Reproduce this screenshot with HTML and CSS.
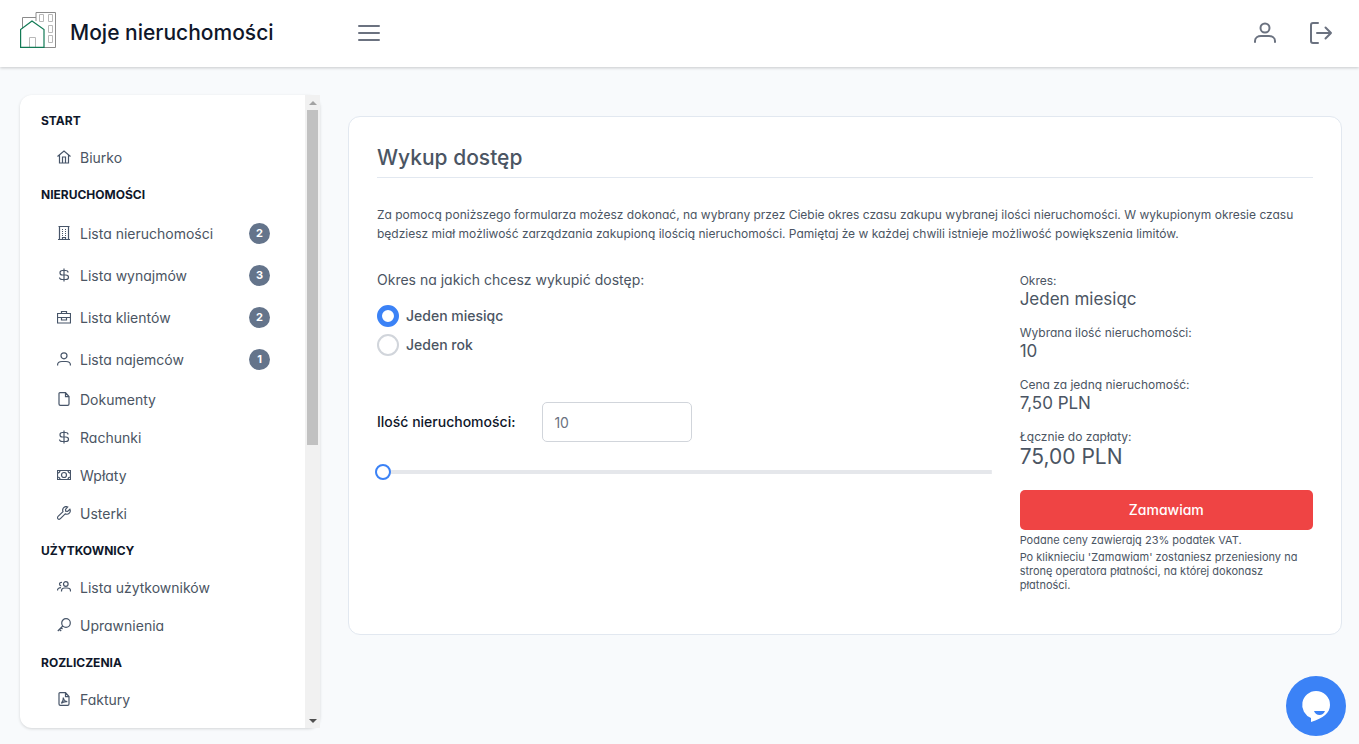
FILE: index.html
```html
<!DOCTYPE html>
<html lang="pl">
<head>
<meta charset="utf-8">
<meta name="viewport" content="width=device-width, initial-scale=1">
<title>Moje nieruchomości</title>
<link rel="stylesheet" href="styles.css">
</head>
<body>
<header class="topbar">
  <a class="brand" href="#">
    <svg class="brand-logo" viewBox="0 0 36 36" fill="none">
      <g stroke="#8b8b8b"><path d="M2.500 16V5.500H16M16 9V.5H35.500V35.500H24"/></g>
      <g stroke="#b8b8b8"><path d="M19.500 2.500h4v7h-4zM28.500 2.500h4v7h-4zM28.500 13.500h4v7h-4zM28.500 23.500h4v7h-4zM9.500 35V25.500h6V35"/></g>
      <path d="M.6 35.400V17.500L12 9l12 8.500v17.900z" stroke="#127a55" stroke-width="1.200"/>
    </svg>
    <span>Moje nieruchomości</span>
  </a>
  <button class="icon-button" type="button" aria-label="Menu">
    <svg viewBox="0 0 24 24"><path d="M2 5h20M2 12h20M2 19h20"/></svg>
  </button>
  <nav class="topbar-actions" aria-label="Konto">
    <button class="icon-button" type="button" aria-label="Profil">
      <svg viewBox="0 0 24 24"><circle cx="12" cy="7" r="4.500"/><path d="M2 21v-1c0-3.300 3-5 6-5h8c3 0 6 1.700 6 5v1"/></svg>
    </button>
    <button class="icon-button" type="button" aria-label="Wyloguj">
      <svg viewBox="0 0 24 24"><path d="M9 2H4C2.900 2 2 2.900 2 4v16c0 1.100.9 2 2 2h5M8 12h14M16.500 6.500 22 12l-5.500 5.500"/></svg>
    </button>
  </nav>
</header>

<div class="layout">
  <aside class="sidebar">
    <nav class="menu" aria-label="Menu główne">
      <h2 class="menu-heading">START</h2>
      <a class="menu-item" href="#"><svg viewBox="0 0 14 14"><path d="M.5 6.500 7 1l6.500 5.500M2.500 5v8h9V5M5.500 13V7h3v6"/></svg><span class="menu-label">Biurko</span></a>

      <h2 class="menu-heading">NIERUCHOMOŚCI</h2>
      <a class="menu-item counted" href="#"><svg viewBox="0 0 14 14"><path d="M1 13.500h12M2.500 13.500V.5h9v13M1.500.5h11M5 3.500h1M8 3.500h1M5 5.500h1M8 5.500h1M5 7.500h1M8 7.500h1M5 9.500h1M8 9.500h1M5.500 13.500v-2h3v2"/></svg><span class="menu-label">Lista nieruchomości</span><span class="badge">2</span></a>
      <a class="menu-item counted" href="#"><svg viewBox="0 0 14 14"><path d="M7 .5v13M11 4.500C11 3 10 2.500 8.500 2.500H5.300C3.800 2.500 3 3.300 3 4.700S3.800 7 5.300 7h3.400c1.500 0 2.800.7 2.800 2.200s-1.300 2.300-2.800 2.300H5.200c-1.500 0-2.700-.7-2.700-2"/></svg><span class="menu-label">Lista wynajmów</span><span class="badge">3</span></a>
      <a class="menu-item counted" href="#"><svg viewBox="0 0 14 14"><path d="M.5 3.500h13v9.500H.5zM4.500 3.500V1.500h5v2M.5 7.500h13M4.500 7.500V10h5V7.500"/></svg><span class="menu-label">Lista klientów</span><span class="badge">2</span></a>
      <a class="menu-item counted" href="#"><svg viewBox="0 0 14 14"><circle cx="7" cy="3.800" r="3"/><path d="M.6 13.500v-.7C.6 10.700 2.500 9.500 5 9.500h4c2.500 0 4.400 1.200 4.400 3.300v.7"/></svg><span class="menu-label">Lista najemców</span><span class="badge">1</span></a>
      <a class="menu-item" href="#"><svg viewBox="0 0 14 14"><path d="M3 .6h5.500l3.500 4V12c0 .8-.6 1.400-1.400 1.400H3.400C2.600 13.400 2 12.800 2 12V1.600c0-.6.4-1 1-1zM8.500.6V4.600H12"/></svg><span class="menu-label">Dokumenty</span></a>
      <a class="menu-item" href="#"><svg viewBox="0 0 14 14"><path d="M7 .5v13M11 4.500C11 3 10 2.500 8.500 2.500H5.300C3.800 2.500 3 3.300 3 4.700S3.800 7 5.300 7h3.400c1.500 0 2.800.7 2.800 2.200s-1.300 2.300-2.800 2.300H5.200c-1.500 0-2.700-.7-2.700-2"/></svg><span class="menu-label">Rachunki</span></a>
      <a class="menu-item" href="#"><svg viewBox="0 0 14 14"><path d="M.5 2.500h13v9H.5zM.5 5c1.500 0 2.500-1 2.500-2.500M13.500 5C12 5 11 4 11 2.500M.5 9C2 9 3 10 3 11.500M13.500 9c-1.500 0-2.500 1-2.500 2.500"/><circle cx="7" cy="7" r="2.500"/></svg><span class="menu-label">Wpłaty</span></a>
      <a class="menu-item" href="#"><svg viewBox="0 0 14 14"><path d="M12.900 3.300 10.600 5.400 8.700 5.200 8.500 3.400 10.700 1C9.300.3 7.500.7 6.500 1.900 5.600 3 5.500 4.500 6 5.700L1.100 10.400c-.8.700-.8 1.700-.1 2.400s1.700.7 2.400-.1L8.200 7.900c1.400.6 3 .3 4.100-.8 1-1 1.200-2.500.6-3.800z"/></svg><span class="menu-label">Usterki</span></a>

      <h2 class="menu-heading">UŻYTKOWNICY</h2>
      <a class="menu-item" href="#"><svg viewBox="0 0 14 14"><circle cx="8.800" cy="4" r="2.300"/><path d="M4.500 11.500v-.7C4.500 9 5.800 8 7.500 8H10c2 0 3.500 1 3.500 2.800v.7M5 2.500c-1.500-.4-2.500.5-2.500 1.600s.8 1.700 1.700 1.700M.5 10.500C.5 8.700 1.800 7.700 4 7.700"/></svg><span class="menu-label">Lista użytkowników</span></a>
      <a class="menu-item" href="#"><svg viewBox="0 0 14 14"><circle cx="9" cy="5" r="4.300"/><path d="M5.800 8 .8 13M2.500 11.300 4.200 13M4.200 9.700l1.300 1.300"/></svg><span class="menu-label">Uprawnienia</span></a>

      <h2 class="menu-heading">ROZLICZENIA</h2>
      <a class="menu-item" href="#"><svg viewBox="0 0 14 14"><path d="M3 .6h5.500l3.500 4V12c0 .8-.6 1.400-1.400 1.400H3.400C2.600 13.400 2 12.800 2 12V1.600c0-.6.4-1 1-1zM8.500.6V4.600H12M6.300 5.500c.4 2.600 1.700 4 4 4.200-2.600-.3-4.400.2-6 1.700 1.500-1.500 2.300-3.200 2-5.900z"/></svg><span class="menu-label">Faktury</span></a>
    </nav>
    <div class="scrollbar" aria-hidden="true">
      <span class="scroll-arrow up"></span>
      <div class="scroll-track"><div class="scroll-thumb"></div></div>
      <span class="scroll-arrow down"></span>
    </div>
  </aside>

  <main class="card">
    <h1 class="card-title">Wykup dostęp</h1>
    <p class="intro">Za pomocą poniższego formularza możesz dokonać, na wybrany przez Ciebie okres czasu zakupu wybranej ilości nieruchomości. W wykupionym okresie czasu będziesz miał możliwość zarządzania zakupioną ilością nieruchomości. Pamiętaj że w każdej chwili istnieje możliwość powiększenia limitów.</p>
    <form class="order">
      <div class="options">
        <fieldset class="period">
          <legend>Okres na jakich chcesz wykupić dostęp:</legend>
          <label class="radio"><input type="radio" name="period" checked>Jeden miesiąc</label>
          <label class="radio"><input type="radio" name="period">Jeden rok</label>
        </fieldset>
        <div class="amount">
          <label for="amount">Ilość nieruchomości:</label>
          <input id="amount" type="text" value="10">
        </div>
        <input class="slider" type="range" min="10" max="500" value="10" aria-label="Ilość nieruchomości">
      </div>
      <div class="checkout">
        <dl class="summary">
          <div><dt>Okres:</dt><dd>Jeden miesiąc</dd></div>
          <div><dt>Wybrana ilość nieruchomości:</dt><dd>10</dd></div>
          <div><dt>Cena za jedną nieruchomość:</dt><dd>7,50 PLN</dd></div>
          <div><dt>Łącznie do zapłaty:</dt><dd class="total">75,00 PLN</dd></div>
        </dl>
        <button class="submit" type="button">Zamawiam</button>
        <p class="note">Podane ceny zawierają 23% podatek VAT.</p>
        <p class="note">Po kliknieciu 'Zamawiam' zostaniesz przeniesiony na stronę operatora płatności, na której dokonasz płatności.</p>
      </div>
    </form>
  </main>
</div>

<button class="chat" type="button" aria-label="Czat">
  <svg viewBox="0 0 60 60"><path d="M30 15a14 14 0 0 1 14 14c0 8-6.500 13-19 17v-4A14 14 0 0 1 30 15z" fill="#fff"/><path d="M28 35h11c-1 2.500-3 4-5.500 4S29 37.500 28 35z" fill="#3b82f6"/></svg>
</button>
</body>
</html>
```

FILE: styles.css
```css
* { box-sizing: border-box; }

body {
  margin: 0;
  min-height: 100vh;
  background: #f8fafc;
  color: #4b5563;
  font-family: Inter, "Liberation Sans", sans-serif;
  font-size: 14px;
  line-height: 20px;
  font-feature-settings: "cv11";
}

h1, h2, p, dl, dd { margin: 0; }
a { color: inherit; text-decoration: none; }
button, input { font: inherit; font-feature-settings: inherit; color: inherit; }
button { border: 0; padding: 0; background: none; cursor: pointer; }
svg { display: block; fill: none; }

.topbar {
  display: flex;
  align-items: center;
  height: 67px;
  padding: 0 26px 2px 20px;
  background: #fff;
  box-shadow: 0 1px 3px rgba(0, 0, 0, 0.2);
}
.brand {
  display: flex;
  gap: 14px;
  width: 337px;
  color: #0f172a;
  font-size: 21px;
  font-weight: 500;
  line-height: 41px;
  font-feature-settings: normal;
}
.brand-logo { width: 36px; height: 36px; }
.icon-button { color: #6b7280; }
.icon-button svg {
  width: 24px;
  height: 24px;
  stroke: currentColor;
  stroke-width: 2;
  stroke-linecap: round;
  stroke-linejoin: round;
}
.topbar-actions { display: flex; gap: 32px; margin-left: auto; }

.layout {
  display: grid;
  grid-template-columns: 300px minmax(0, 1fr);
  align-items: start;
  gap: 28px;
  padding: 28px 17px 16px 20px;
}

.sidebar {
  display: flex;
  height: calc(100vh - 111px);
  background: #fff;
  border-radius: 12px;
  box-shadow: 0 1px 3px rgba(0, 0, 0, 0.15);
}
.menu {
  flex: 1;
  padding: 7px 35px 7px 21px;
  overflow-y: auto;
  scrollbar-width: none;
}
.menu-heading {
  padding-top: 2px;
  color: #0f172a;
  font-size: 12px;
  font-weight: 700;
  line-height: 34px;
}
.menu-item {
  display: flex;
  align-items: center;
  gap: 9px;
  height: 38px;
  padding-left: 16px;
}
.menu-item.counted { height: 42px; }
.menu-item svg { width: 14px; height: 14px; stroke: #475569; stroke-width: 1.2; }
.menu-label { padding-top: 2px; }
.badge {
  width: 21px;
  margin-left: auto;
  border-radius: 50%;
  background: #64748b;
  color: #fff;
  font-size: 11px;
  font-weight: 700;
  line-height: 21px;
  text-align: center;
}

.scrollbar {
  display: flex;
  flex-direction: column;
  width: 15px;
  background: #f1f1f1;
}
.scroll-arrow { display: grid; place-items: center; height: 15px; }
.scroll-arrow::before { content: ""; border: 4px solid transparent; }
.scroll-arrow.up::before { border-top: 0; border-bottom-color: #a3a3a3; }
.scroll-arrow.down::before { border-bottom: 0; border-top-color: #505050; }
.scroll-track { flex: 1; padding: 0 2px; }
.scroll-thumb { height: 55.5%; background: #c1c1c1; }

.card {
  margin-top: 21px;
  padding: 28px 28px 39px;
  background: #fff;
  border: 1px solid #e2e8f0;
  border-radius: 12px;
}
.card-title {
  padding-bottom: 6px;
  border-bottom: 1px solid #e2e8f0;
  font-size: 21px;
  font-weight: 500;
  line-height: 26px;
}
.intro { margin-top: 27px; font-size: 12px; line-height: 19px; }

.order {
  display: grid;
  grid-template-columns: repeat(3, minmax(0, 1fr));
  gap: 28px;
  margin-top: 27px;
}
.options { grid-column: span 2; }
.period { margin: 0; padding: 0; border: 0; }
.period legend { padding: 0; margin-bottom: 15px; }
.radio {
  display: flex;
  align-items: center;
  gap: 7px;
  height: 22px;
  margin-bottom: 7px;
  font-weight: 500;
  line-height: 22px;
}
.radio input {
  appearance: none;
  width: 22px;
  height: 22px;
  margin: 0;
  border: 2px solid #d1d5db;
  border-radius: 50%;
  background: #fff;
}
.radio input:checked { border: 5px solid #3b82f6; }
.amount {
  display: flex;
  align-items: center;
  gap: 27px;
  margin-top: 39px;
  color: #0f172a;
  font-weight: 500;
}
.amount input {
  width: 150px;
  height: 40px;
  padding: 0 11px;
  border: 1px solid #d1d5db;
  border-radius: 5px;
  background: #fff;
  color: #6b7280;
  font-weight: 400;
}
.slider {
  display: block;
  appearance: none;
  width: calc(100% + 2px);
  height: 16px;
  margin: 22px 0 0 -2px;
  background: linear-gradient(#e5e7eb, #e5e7eb) center / 100% 4px no-repeat;
}
.slider::-webkit-slider-thumb {
  appearance: none;
  width: 16px;
  height: 16px;
  border: 2px solid #3b82f6;
  border-radius: 50%;
  background: #fff;
}

.summary { padding-top: 3px; }
.summary > div { margin-bottom: 16px; }
.summary dt { font-size: 12px; line-height: 16px; }
.summary dd { font-size: 17px; line-height: 20px; }
.summary .total { font-size: 21px; line-height: 24px; }
.submit {
  display: block;
  width: 100%;
  height: 40px;
  margin-top: 21px;
  margin-bottom: 3px;
  border-radius: 5px;
  background: #ef4444;
  color: #fff;
  font-weight: 500;
}
.note { margin-bottom: 3px; font-size: 11px; line-height: 14px; }

.chat {
  position: fixed;
  right: 13px;
  bottom: 8px;
  width: 60px;
  height: 60px;
  border-radius: 50%;
  background: #3b82f6;
}
```
